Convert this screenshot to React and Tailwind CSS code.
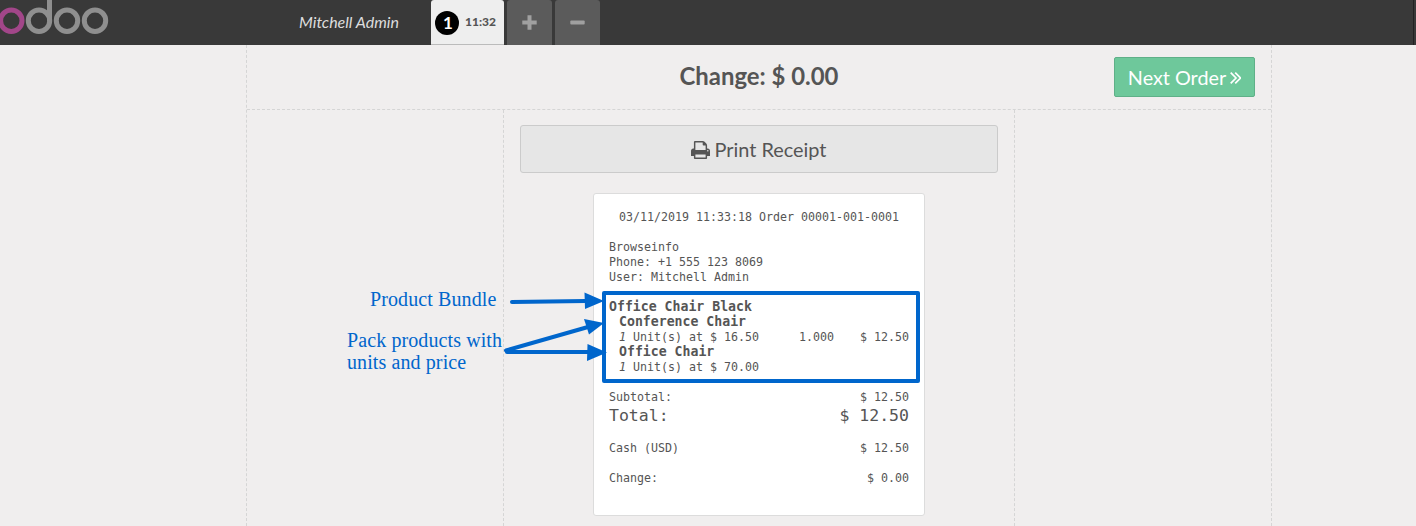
import React from 'react';

function OdooLogo() {
  return (
    <svg className="block h-[45px] w-[110px]" viewBox="0 0 110 45" fill="none" strokeWidth="5">
      <circle cx="11.3" cy="20.7" r="10.7" stroke="#a24689" />
      <circle cx="39" cy="20.7" r="10.7" stroke="#8f8f8f" />
      <path d="M49.5 0V21" stroke="#8f8f8f" />
      <circle cx="67" cy="20.7" r="10.7" stroke="#8f8f8f" />
      <circle cx="95" cy="20.7" r="10.7" stroke="#8f8f8f" />
    </svg>
  );
}

function PrintIcon() {
  return (
    <svg className="h-[18px] w-[19px]" viewBox="0 0 1664 1536" preserveAspectRatio="none" fill="currentColor">
      <path d="M384 1408h896v-256h-896v256zM384 768h896v-384h-160q-40 0-68-28t-28-68v-160h-640v640zM1536 832q0-26-19-45t-45-19-45 19-19 45 19 45 45 19 45-19 19-45zM1664 832v416q0 13-9.5 22.5t-22.5 9.5h-224v160q0 40-28 68t-68 28h-960q-40 0-68-28t-28-68v-160h-224q-13 0-22.5-9.5t-9.5-22.5v-416q0-79 56.5-135.5t135.5-56.5h64v-544q0-40 28-68t68-28h672q40 0 88 20t76 48l152 152q28 28 48 76t20 88v256h64q79 0 135.5 56.5t56.5 135.5z" />
    </svg>
  );
}

function Header() {
  return (
    <header className="flex h-[45px] items-start bg-[#393939] font-['Lato',sans-serif]">
      <div className="w-[299px]">
        <OdooLogo />
      </div>
      <div className="w-[132px] text-base leading-[43px] text-[#ddd] italic">Mitchell Admin</div>
      <div className="flex gap-[3px]">
        <div className="flex h-[45px] w-[73px] items-center rounded-t-[3px] border-b border-[#bbb] bg-[#eee] pl-1">
          <span className="mt-px flex size-6 items-center justify-center rounded-full bg-black pl-0.5 text-[17px] font-bold text-white">1</span>
          <span className="ml-1.5 text-[12px] font-black text-[#555]">11:32</span>
        </div>
        <div className="flex h-[45px] w-[45px] items-center justify-center rounded-t-[3px] bg-[#5b5b5b]">
          <svg className="size-[15px]" viewBox="0 0 15 15" stroke="#a0a0a0" strokeWidth="4" strokeLinecap="square">
            <path d="M2.300 7.5h10.400M7.5 2.300v10.400" strokeLinejoin="round" />
          </svg>
        </div>
        <div className="flex h-[45px] w-[45px] items-center justify-center rounded-t-[3px] bg-[#5b5b5b]">
          <svg className="size-[15px]" viewBox="0 0 15 15" fill="#a0a0a0">
            <rect x="0.3" y="5.500" width="14.400" height="4" rx="1" />
          </svg>
        </div>
      </div>
      <div className="ml-auto h-[45px] w-[3px] border-l border-[#222]" />
    </header>
  );
}

function Row({ label, value }) {
  return (
    <div className="flex justify-between">
      <span>{label}</span>
      <span>{value}</span>
    </div>
  );
}

function PackItem({ name, price, quantity, total }) {
  return (
    <div className="pl-2.5">
      <div className="h-[15px] text-[13.2px] leading-[14px] font-bold">{name}</div>
      <div className="flex">
        <span className="w-[180px]">
          <i className="mr-[7px]">1</i>Unit(s) at $ {price}
        </span>
        <span className="w-[35px]">{quantity}</span>
        <span className="ml-auto">{total}</span>
      </div>
    </div>
  );
}

function Receipt() {
  return (
    <section className="mx-auto mt-5 h-[323px] w-[332px] rounded-[3px] border border-[#dcdcdc] bg-white px-[15px] pt-4 font-['DejaVu_Sans_Mono',monospace] text-[11.63px] leading-[15px] whitespace-nowrap text-[#555]">
      <div className="text-center">03/11/2019 11:33:18 Order 00001-001-0001</div>
      <div className="mt-[15px]">Browseinfo</div>
      <div>Phone: +1 555 123 8069</div>
      <div>User: Mitchell Admin</div>
      <div className="-mr-[11px] -ml-[7px] mt-1.5 h-[92px] rounded-[2px] border-4 border-[#0066cc] pt-[5px] pr-[7px] pl-[3px]">
        <div className="h-[15px] text-[13.2px] leading-[14px] font-bold">Office Chair Black</div>
        <PackItem name="Conference Chair" price="16.50" quantity="1.000" total="$ 12.50" />
        <PackItem name="Office Chair" price="70.00" />
      </div>
      <div className="mt-[7px]">
        <Row label="Subtotal:" value="$ 12.50" />
      </div>
      <div className="text-[16.5px] leading-[21px]">
        <Row label="Total:" value="$ 12.50" />
      </div>
      <div className="mt-[15px]">
        <Row label="Cash (USD)" value="$ 12.50" />
      </div>
      <div className="mt-[15px]">
        <Row label="Change:" value="$ 0.00" />
      </div>
    </section>
  );
}

function Annotations() {
  return (
    <div className="absolute inset-0 font-['Liberation_Serif',serif] text-[20px] leading-[22px] tracking-[0.1px] whitespace-nowrap text-[#0066cc]">
      <div className="absolute top-[288px] left-[370px]">Product Bundle</div>
      <div className="absolute top-[329px] left-[347px]">
        Pack products with
        <br />
        units and price
      </div>
      <svg className="absolute inset-0 h-[526px] w-[1416px]" viewBox="0 0 1416 526" fill="#0066cc" stroke="#0066cc">
        <g strokeWidth="4" strokeLinecap="round" fill="none">
          <path d="M512 302 L586 301" />
          <path d="M506 350.5 L588 327" />
          <path d="M507 352 L589 352" />
        </g>
        <g stroke="none">
          <path d="M584.5 292.5 L604 301 L585 309Z" />
          <path d="M584 319 L604 323 L589 334.500Z" />
          <path d="M587.500 344 L607 352.500 L587 361Z" />
        </g>
      </svg>
    </div>
  );
}

export default function App() {
  return (
    <div className="relative h-[526px] w-[1416px] overflow-hidden bg-[#f0eeee] text-[#555]">
      <Header />
      <main className="ml-[246px] flex h-[481px] w-[1026px] flex-col border-x border-dashed border-[#d5d5d5] font-['Lato',sans-serif]">
        <div className="grid h-[65px] shrink-0 grid-cols-[1fr_auto_1fr] items-start border-b border-dashed border-[#d5d5d5] pr-4">
          <span />
          <h1 className="mt-4 pl-4 text-[23.9px] leading-[30px] font-bold">Change: $ 0.00</h1>
          <button className="mt-3 flex h-10 w-[141px] items-center justify-center gap-1 justify-self-end rounded-[2px] border border-[#5fb088] bg-[#6ec89b] pt-0.5 text-[19.8px] whitespace-nowrap text-white">
            Next Order
            <svg className="h-3 w-[11px]" viewBox="0 0 11 12" fill="none" stroke="currentColor" strokeWidth="1.7">
              <path d="M.7.7 6 6 .7 11.300M5.200.7 10.500 6 5.200 11.300" />
            </svg>
          </button>
        </div>
        <div className="flex min-h-0 flex-1">
          <div className="w-64 shrink-0" />
          <div className="w-[512px] shrink-0 border-x border-dashed border-[#d5d5d5] px-4 pt-[15px]">
            <button className="flex h-12 w-[478px] items-center justify-center gap-1 rounded-[3px] border border-[#cbcbcb] bg-[#e6e6e6] pt-0.5 text-[19.9px]">
              <PrintIcon />
              Print Receipt
            </button>
            <Receipt />
          </div>
        </div>
      </main>
      <Annotations />
    </div>
  );
}
